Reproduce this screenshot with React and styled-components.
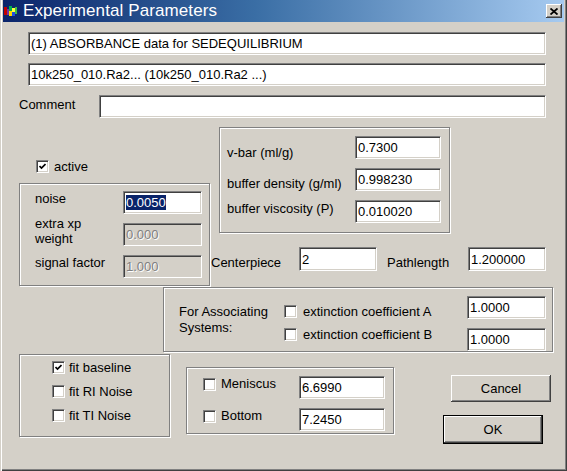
import React from 'react';
import styled, { createGlobalStyle } from 'styled-components';

const GlobalStyle = createGlobalStyle`
  html, body {
    margin: 0;
    padding: 0;
    background: #d4d0c8;
  }
  body {
    font-family: "Liberation Sans", Arial, sans-serif;
    font-size: 13px;
    color: #000;
  }
`;

const Window = styled.div`
  position: relative;
  width: 567px;
  height: 471px;
  box-sizing: border-box;
  background: #d4d0c8;
  overflow: hidden;
  box-shadow: inset 1px 0 #d4d0c8, inset 2px 0 #fff,
    inset -1px -1px #404040, inset -2px -2px #808080;
`;

const TitleBar = styled.div`
  height: 22px;
  margin: 0 3px;
  display: flex;
  align-items: center;
  padding-left: 1px;
  background: linear-gradient(to right, #0a246a 0%, #3a6ea5 45%, #a6caf0 100%);
`;

const TitleText = styled.span`
  margin-left: 5px;
  color: #fff;
  font-size: 17px;
  letter-spacing: 0.1px;
`;

const CloseButton = styled.div`
  margin-left: auto;
  margin-right: 2px;
  width: 16px;
  height: 14px;
  box-sizing: border-box;
  background: #d4d0c8;
  display: flex;
  align-items: center;
  justify-content: center;
  box-shadow: inset -1px -1px #404040, inset 1px 1px #fff,
    inset -2px -2px #808080, inset 2px 2px #d4d0c8;
`;

const Body = styled.div`
  display: flex;
  flex-direction: column;
  align-items: flex-start;
  padding-top: 10px;
`;

const Field = styled.div`
  box-sizing: border-box;
  width: ${(p) => p.$w}px;
  height: ${(p) => p.$h || 23}px;
  margin-left: ${(p) => p.$ml || 0}px;
  margin-top: ${(p) => p.$mt || 0}px;
  padding: 0 2px;
  display: flex;
  align-items: center;
  white-space: nowrap;
  overflow: hidden;
  background: ${(p) => (p.$disabled ? '#d4d0c8' : '#fff')};
  color: ${(p) => (p.$disabled ? '#808080' : '#000')};
  text-shadow: ${(p) => (p.$disabled ? '1px 1px #fff' : 'none')};
  border: 1px solid;
  border-color: #808080 #fff #fff #808080;
  box-shadow: inset 1px 1px #404040, inset -1px -1px #d4d0c8;
`;

const Selected = styled.span`
  background: #0a246a;
  color: #fff;
`;

const Row = styled.div`
  display: flex;
  align-items: ${(p) => p.$align || 'center'};
  margin-left: ${(p) => p.$ml || 0}px;
  margin-top: ${(p) => p.$mt || 0}px;
`;

const Label = styled.span`
  display: block;
  width: ${(p) => (p.$w ? `${p.$w}px` : 'auto')};
  margin-left: ${(p) => p.$ml || 0}px;
  margin-top: ${(p) => p.$dy || 0}px;
  line-height: ${(p) => p.$lh || 16}px;
  align-self: ${(p) => p.$self || 'start'};
  white-space: nowrap;
`;

const Group = styled.div`
  box-sizing: border-box;
  width: ${(p) => p.$w}px;
  height: ${(p) => p.$h}px;
  margin-left: ${(p) => p.$ml || 0}px;
  margin-top: ${(p) => p.$mt || 0}px;
  border: 1px solid #808080;
  box-shadow: inset 1px 1px #fff, 1px 1px #fff;
`;

const ParamGrid = styled.div`
  display: grid;
  grid-template-columns: ${(p) => p.$cols};
  grid-auto-rows: 24px;
  row-gap: 8px;
  padding: ${(p) => p.$pad};
`;

const CheckLine = styled.label`
  display: flex;
  align-items: center;
  gap: ${(p) => p.$gap || 4}px;
  height: ${(p) => p.$h || 13}px;
  margin-left: ${(p) => p.$ml || 0}px;
  margin-top: ${(p) => p.$mt || 0}px;
  line-height: 16px;
  white-space: nowrap;
`;

const Box = styled.span`
  flex: none;
  width: 13px;
  height: 13px;
  box-sizing: border-box;
  background: #fff;
  border: 1px solid;
  border-color: #808080 #fff #fff #808080;
  box-shadow: inset 1px 1px #404040, inset -1px -1px #d4d0c8;
  display: flex;
  align-items: center;
  justify-content: center;
`;

const Column = styled.div`
  display: flex;
  flex-direction: column;
  align-items: flex-start;
  width: ${(p) => (p.$w ? `${p.$w}px` : 'auto')};
  margin-left: ${(p) => p.$ml || 0}px;
  margin-top: ${(p) => p.$mt || 0}px;
  padding-top: ${(p) => p.$pt || 0}px;
  gap: ${(p) => p.$gap || 0}px;
`;

const Button = styled.button`
  box-sizing: border-box;
  width: 100px;
  height: ${(p) => (p.$default ? 29 : 27)}px;
  margin-left: ${(p) => p.$ml || 0}px;
  margin-top: ${(p) => p.$mt || 0}px;
  padding: 0;
  background: #d4d0c8;
  font-family: "Liberation Sans", Arial, sans-serif;
  font-size: 13px;
  color: #000;
  border: ${(p) => (p.$default ? '1px solid #000' : 'none')};
  box-shadow: inset -1px -1px #404040, inset 1px 1px #fff,
    inset -2px -2px #808080, inset 2px 2px #d4d0c8;
`;

const AppIcon = () => (
  <svg width="14" height="14" viewBox="0 0 14 14">
    <rect x="0" y="3" width="3" height="8" fill="#c00000" />
    <rect x="3" y="5" width="2" height="6" fill="#7030a0" />
    <rect x="5" y="2" width="3" height="5" fill="#00b050" />
    <rect x="5" y="7" width="3" height="5" fill="#ffd700" />
    <rect x="8" y="4" width="3" height="4" fill="#ffff40" />
    <rect x="8" y="8" width="3" height="4" fill="#2050e0" />
    <rect x="11" y="3" width="2" height="7" fill="#40c040" />
  </svg>
);

const CloseGlyph = () => (
  <svg width="8" height="7" viewBox="0 0 8 7">
    <path d="M0.5 0.5 L7.5 6.5 M7.5 0.5 L0.5 6.5" stroke="#000" strokeWidth="1.8" />
  </svg>
);

const Tick = () => (
  <svg width="7" height="7" viewBox="0 0 7 7">
    <path d="M0.5 3 L2.5 5 L6.5 1" stroke="#000" strokeWidth="1.7" fill="none" />
  </svg>
);

const Check = ({ checked, children, ...rest }) => (
  <CheckLine {...rest}>
    <Box>{checked && <Tick />}</Box>
    {children && <span>{children}</span>}
  </CheckLine>
);

export default function App() {
  return (
    <Window>
      <GlobalStyle />
      <TitleBar>
        <AppIcon />
        <TitleText>Experimental Parameters</TitleText>
        <CloseButton>
          <CloseGlyph />
        </CloseButton>
      </TitleBar>

      <Body>
        <Field $w={518} $ml={28}>(1) ABSORBANCE data for SEDEQUILIBRIUM</Field>
        <Field $w={518} $ml={28} $mt={8}>10k250_010.Ra2... (10k250_010.Ra2 ...)</Field>

        <Row $ml={19} $mt={9}>
          <Label $w={80} $self="center" $dy={-3}>Comment</Label>
          <Field $w={447}></Field>
        </Row>

        <Row $align="flex-start" $mt={9}>
          <Column $ml={19} $w={191}>
            <Check checked $ml={17} $mt={33} $gap={5}>active</Check>
            <Group $w={191} $h={103} $mt={10}>
              <ParamGrid $cols="88px 79px" $pad="7px 0 0 15px">
                <Label>noise</Label>
                <Field $w={79}><Selected>0.0050</Selected></Field>
                <Label $lh={15} $dy={-7}>extra xp<br />weight</Label>
                <Field $w={79} $disabled>0.000</Field>
                <Label>signal factor</Label>
                <Field $w={79} $disabled>1.000</Field>
              </ParamGrid>
            </Group>
          </Column>

          <Column $ml={1}>
            <Group $w={231} $h={106} $ml={8}>
              <ParamGrid $cols="128px 86px" $pad="8px 0 0 7px">
                <Label $dy={9}>v-bar (ml/g)</Label>
                <Field $w={86}>0.7300</Field>
                <Label $dy={8}>buffer density (g/ml)</Label>
                <Field $w={86}>0.998230</Field>
                <Label $dy={1}>buffer viscosity (P)</Label>
                <Field $w={86}>0.010020</Field>
              </ParamGrid>
            </Group>
            <Row $align="flex-end" $mt={14}>
              <Label $w={88} $self="flex-end" $dy={0}>Centerpiece</Label>
              <Field $w={78} $h={24}>2</Field>
              <Label $w={81} $ml={10} $self="flex-end">Pathlength</Label>
              <Field $w={78} $h={24}>1.200000</Field>
            </Row>
          </Column>
        </Row>

        <Group $w={390} $h={65} $ml={163} $mt={1}>
          <Row $align="flex-start" $ml={15}>
            <Column $w={105} $pt={16}>
              <Label>For Associating<br />Systems:</Label>
            </Column>
            <Column $w={183} $pt={17} $gap={10}>
              <Check $gap={6}>extinction coefficient A</Check>
              <Check $gap={6}>extinction coefficient B</Check>
            </Column>
            <Column $pt={8} $gap={9}>
              <Field $w={79}>1.0000</Field>
              <Field $w={79}>1.0000</Field>
            </Column>
          </Row>
        </Group>

        <Row $align="flex-start" $mt={2}>
          <Group $w={151} $h={83} $ml={19}>
            <Column $pt={6} $ml={32} $gap={11}>
              <Check checked>fit baseline</Check>
              <Check>fit RI Noise</Check>
              <Check>fit TI Noise</Check>
            </Column>
          </Group>

          <Group $w={208} $h={67} $ml={16} $mt={13}>
            <ParamGrid $cols="96px 86px" $pad="8px 0 0 16px">
              <Check $h={16} $gap={5}>Meniscus</Check>
              <Field $w={86}>6.6990</Field>
              <Check $h={16} $gap={5}>Bottom</Check>
              <Field $w={86}>7.2450</Field>
            </ParamGrid>
          </Group>

          <Column $ml={49} $mt={21}>
            <Button $ml={8}>Cancel</Button>
            <Button $default $mt={13}>OK</Button>
          </Column>
        </Row>
      </Body>
    </Window>
  );
}
